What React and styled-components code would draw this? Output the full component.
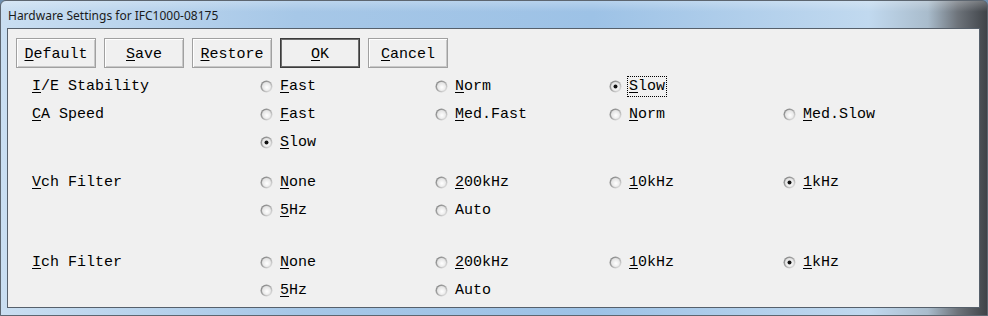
import React from "react";
import styled, { createGlobalStyle } from "styled-components";

const GlobalStyle = createGlobalStyle`
  html, body {
    margin: 0;
    padding: 0;
    background: #6f8fae;
  }
  * {
    box-sizing: border-box;
  }
`;

const Frame = styled.div`
  width: 988px;
  height: 316px;
  display: flex;
  flex-direction: column;
  border-radius: 6px 6px 0 0;
  border: 1px solid #5d6670;
  background: linear-gradient(
    to right,
    #c9def1 0%,
    #a6c7e7 30%,
    #9dc2e6 60%,
    #c1d9ef 88%,
    #a9bccc 94%,
    #6e747b 97%,
    #3f4348 100%
  );
  overflow: hidden;
`;

const TitleBar = styled.div`
  height: 27px;
  display: flex;
  align-items: center;
  padding-left: 7px;
  padding-top: 1px;
  font-family: "Noto Sans", "Open Sans", sans-serif;
  font-size: 12px;
  color: #1b1b1b;
  background: linear-gradient(to bottom, rgba(255, 255, 255, 0.25), rgba(255, 255, 255, 0) 40%);
`;

const Client = styled.div`
  flex: 1;
  margin: 0 7px 7px 6px;
  border: 1px solid #56606b;
  background: #f0f0f0;
  padding: 9px 8px 0 8px;
  font-family: "Liberation Mono", "Courier New", monospace;
  font-size: 15px;
  color: #000;
`;

const Toolbar = styled.div`
  display: flex;
  gap: 8px;
`;

const Button = styled.div`
  width: 80px;
  height: 30px;
  padding-top: 2px;
  display: flex;
  align-items: center;
  justify-content: center;
  background: #f0f0f0;
  border: 1px solid ${(p) => (p.$default ? "#3c3c3c" : "#a0a0a0")};
  box-shadow: inset 1px 1px 0 #ffffff,
    inset -1px -1px 0 ${(p) => (p.$default ? "#8a8a8a" : "#c8c8c8")};
  ${(p) => p.$default && "outline: 1px solid #6d6d6d; outline-offset: -2px;"}
`;

const Key = styled.span`
  text-decoration: underline;
  text-underline-offset: 2px;
`;

const Settings = styled.div`
  margin: 4px 0 0 16px;
  display: flex;
  flex-direction: column;
`;

const Group = styled.div`
  display: grid;
  grid-template-columns: 228px 175px 174px 174px 174px;
  grid-auto-rows: 28px;
  margin-top: ${(p) => p.$gap || 0}px;
`;

const Label = styled.div`
  display: flex;
  align-items: center;
  grid-column: 1;
  grid-row: 1;
`;

const Option = styled.div`
  display: flex;
  align-items: center;
  gap: 5px;
  grid-column: ${(p) => p.$col};
  grid-row: ${(p) => p.$row};
`;

const OptionText = styled.span`
  padding: 1px 1px 0 1px;
  line-height: 18px;
  border: 1px dotted ${(p) => (p.$focus ? "#000" : "transparent")};
`;

const RadioDot = ({ checked }) => (
  <svg width="13" height="13" viewBox="0 0 13 13">
    <defs>
      <linearGradient id="rim" x1="0" y1="0" x2="1" y2="1">
        <stop offset="0" stopColor="#7d7e7e" />
        <stop offset="0.5" stopColor="#a9a9a9" />
        <stop offset="1" stopColor="#f4f4f4" />
      </linearGradient>
      <radialGradient id="fill" cx="0.55" cy="0.6" r="0.6">
        <stop offset="0" stopColor="#ffffff" />
        <stop offset="1" stopColor="#e0e0e0" />
      </radialGradient>
    </defs>
    <circle cx="6.5" cy="6.5" r="6" fill="url(#rim)" />
    <circle cx="6.5" cy="6.5" r="4.5" fill="url(#fill)" />
    {checked && <circle cx="6.5" cy="6.5" r="2" fill="#111" />}
  </svg>
);

const Accel = ({ text, k = 0 }) =>
  k < 0 ? (
    text
  ) : (
    <>
      {text.slice(0, k)}
      <Key>{text[k]}</Key>
      {text.slice(k + 1)}
    </>
  );

const groups = [
  {
    label: "I/E Stability",
    gap: 0,
    options: [
      { text: "Fast" },
      { text: "Norm" },
      { text: "Slow", checked: true, focus: true },
    ],
  },
  {
    label: "CA Speed",
    gap: 0,
    options: [
      { text: "Fast" },
      { text: "Med.Fast" },
      { text: "Norm" },
      { text: "Med.Slow" },
      { text: "Slow", checked: true },
    ],
  },
  {
    label: "Vch Filter",
    gap: 12,
    options: [
      { text: "None" },
      { text: "200kHz" },
      { text: "10kHz" },
      { text: "1kHz", checked: true },
      { text: "5Hz" },
      { text: "Auto", k: -1 },
    ],
  },
  {
    label: "Ich Filter",
    gap: 24,
    options: [
      { text: "None" },
      { text: "200kHz" },
      { text: "10kHz" },
      { text: "1kHz", checked: true },
      { text: "5Hz" },
      { text: "Auto", k: -1 },
    ],
  },
];

const buttons = ["Default", "Save", "Restore", "OK", "Cancel"];

export default function App() {
  return (
    <>
      <GlobalStyle />
      <Frame>
        <TitleBar>Hardware Settings for IFC1000-08175</TitleBar>
        <Client>
          <Toolbar>
            {buttons.map((b) => (
              <Button key={b} $default={b === "OK"}>
                <Accel text={b} />
              </Button>
            ))}
          </Toolbar>
          <Settings>
            {groups.map((g) => (
              <Group key={g.label} $gap={g.gap}>
                <Label>
                  <Accel text={g.label} />
                </Label>
                {g.options.map((o, i) => (
                  <Option key={o.text + i} $col={(i % 4) + 2} $row={Math.floor(i / 4) + 1}>
                    <RadioDot checked={o.checked} />
                    <OptionText $focus={o.focus}>
                      <Accel text={o.text} k={o.k} />
                    </OptionText>
                  </Option>
                ))}
              </Group>
            ))}
          </Settings>
        </Client>
      </Frame>
    </>
  );
}
